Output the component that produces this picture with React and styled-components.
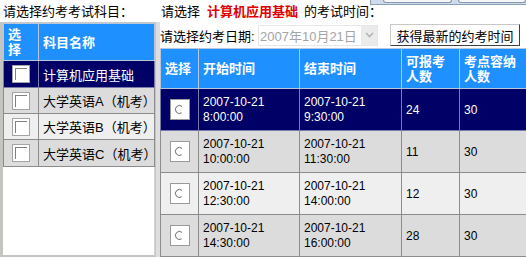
import React from "react";
import styled, { createGlobalStyle } from "styled-components";

const GlobalStyle = createGlobalStyle`
  html, body { margin: 0; padding: 0; background: #fff; }
  body {
    font-family: "Liberation Sans", "Noto Sans CJK SC", sans-serif;
    font-size: 13px;
    color: #000;
  }
`;

const Page = styled.div`
  position: relative;
  display: flex;
  width: 526px;
  height: 259px;
  overflow: hidden;
`;

const LeftFrame = styled.div`
  width: 155px;
  height: 257px;
  display: flex;
  flex-direction: column;
`;

const Divider = styled.div`
  width: 5px;
  margin-top: 22px;
  height: 235px;
  background: #dedede;
  border-left: 1px solid #c4c4c4;
  box-sizing: border-box;
`;

const RightFrame = styled.div`
  flex: 1;
  display: flex;
  flex-direction: column;
  min-width: 0;
`;

const Caption = styled.div`
  height: 22px;
  line-height: 24px;
  padding-left: ${(p) => p.$indent || 0}px;
  white-space: nowrap;
  background: #fff;
`;

const Subject = styled.span`
  color: #e00000;
  font-weight: bold;
  margin: 0 6px 0 7px;
`;

const TableBox = styled.div`
  flex: 1;
  background: #fff;
  border-left: 3px solid #c4c4c0;
  border-top: 1px solid #c8c8c8;
  border-bottom: 2px solid #c4c4c0;
  border-right: 1px solid #d4d4d4;
`;

const Grid = styled.table`
  border-collapse: collapse;
  table-layout: fixed;
  width: ${(p) => p.$width}px;
`;

const HeadRow = styled.tr`
  height: ${(p) => p.$height}px;
  background: #1e90ff;
`;

const Th = styled.th`
  color: #fff;
  font-weight: bold;
  text-align: left;
  padding: 0 4px;
  line-height: 15px;
  border: 1px solid #b8c8d8;
  vertical-align: middle;
`;

const rowColors = {
  active: { bg: "#000066", fg: "#fff", line: "#7a7aa8" },
  dark: { bg: "#dcdcdc", fg: "#000", line: "#8c8c8c" },
  light: { bg: "#efefef", fg: "#000", line: "#8c8c8c" },
};

const Row = styled.tr`
  height: ${(p) => p.$height}px;
  background: ${(p) => rowColors[p.$tone].bg};
  color: ${(p) => rowColors[p.$tone].fg};
  td { border-color: ${(p) => rowColors[p.$tone].line}; }
`;

const Td = styled.td`
  padding: 0 ${(p) => (p.$center ? 0 : 4)}px;
  text-align: ${(p) => (p.$center ? "center" : "left")};
  border: 1px solid #8c8c8c;
  vertical-align: middle;
  white-space: nowrap;
`;

const TimeText = styled.div`
  font-size: 12px;
  line-height: 15px;
`;

const Count = styled.span`
  font-size: 12px;
`;

const CheckBox = styled.span`
  display: inline-flex;
  box-sizing: border-box;
  width: 18px;
  height: 18px;
  background: #fff;
  border: 1px solid #a4a4a4;
  padding: 2px;
  vertical-align: middle;
  &::after {
    content: "";
    flex: 1;
    border-top: 1px solid #808080;
    border-left: 1px solid #808080;
  }
`;

const RadioBox = styled.span`
  display: inline-flex;
  align-items: center;
  justify-content: center;
  box-sizing: border-box;
  width: 20px;
  height: 21px;
  background: #fff;
  border: 1px solid #9a9a9a;
  vertical-align: middle;
`;

const DateRow = styled.div`
  height: 26px;
  display: flex;
  align-items: center;
  background: #fff;
  white-space: nowrap;
`;

const DateLabel = styled.span`
  width: 98px;
`;

const Select = styled.div`
  width: 120px;
  height: 21px;
  box-sizing: border-box;
  display: flex;
  align-items: center;
  color: #a4a4a4;
  background: #fff;
  border: 1px solid #e6e6e6;
`;

const SelectText = styled.span`
  flex: 1;
  padding-left: 1px;
`;

const SelectArrow = styled.span`
  width: 16px;
  height: 19px;
  display: flex;
  align-items: center;
  justify-content: center;
  background: #ebebeb;
`;

const Button = styled.button`
  margin-left: 12px;
  height: 22px;
  width: 130px;
  padding: 0;
  font: inherit;
  color: #000;
  background: #fff;
  border: 1px solid;
  border-color: #c8c8c8 #404040 #404040 #c8c8c8;
`;

const Popup = styled.div`
  position: absolute;
  top: 0;
  left: 370px;
  right: 0;
  height: 4px;
  display: flex;
  gap: 6px;
  padding-left: 12px;
  background: #cddbeb;
  border-left: 1px solid #8aa0b8;
  border-bottom: 1px solid #8aa0b8;
  z-index: 2;
`;

const PopupButton = styled.span`
  width: ${(p) => p.$w}px;
  height: 2px;
  background: #f4f6f8;
  border: 1px solid #8898ac;
  border-top: none;
  border-radius: 0 0 4px 4px;
`;

function RadioMark() {
  return (
    <svg width="11" height="11" viewBox="0 0 11 11">
      <path d="M8 2.4 A4 4 0 1 0 7.6 8.8" fill="none" stroke="#6a6a6a" strokeWidth="1" />
    </svg>
  );
}

function Chevron() {
  return (
    <svg width="9" height="6" viewBox="0 0 9 6">
      <path d="M1 1 L4.5 4.5 L8 1" fill="none" stroke="#b4b4b4" strokeWidth="1.6" />
    </svg>
  );
}

const subjects = [
  { name: "计算机应用基础", tone: "active", h: 27 },
  { name: "大学英语A（机考）", tone: "dark", h: 26 },
  { name: "大学英语B（机考）", tone: "light", h: 26 },
  { name: "大学英语C（机考）", tone: "dark", h: 27 },
];

const sessions = [
  { start: "8:00:00", end: "9:30:00", count: 24, cap: 30, tone: "active" },
  { start: "10:00:00", end: "11:30:00", count: 11, cap: 30, tone: "dark" },
  { start: "12:30:00", end: "14:00:00", count: 12, cap: 30, tone: "light" },
  { start: "14:30:00", end: "16:00:00", count: 28, cap: 30, tone: "dark" },
];

export default function App() {
  return (
    <Page>
      <GlobalStyle />
      <LeftFrame>
        <Caption $indent={3}>请选择约考考试科目：</Caption>
        <TableBox>
          <Grid $width={152}>
            <colgroup>
              <col style={{ width: 35 }} />
              <col />
            </colgroup>
            <thead>
              <HeadRow $height={37}>
                <Th>选<br />择</Th>
                <Th>科目名称</Th>
              </HeadRow>
            </thead>
            <tbody>
              {subjects.map((s) => (
                <Row key={s.name} $tone={s.tone} $height={s.h}>
                  <Td $center><CheckBox /></Td>
                  <Td>{s.name}</Td>
                </Row>
              ))}
            </tbody>
          </Grid>
        </TableBox>
      </LeftFrame>
      <Divider />
      <RightFrame>
        <Caption $indent={1}>
          请选择<Subject>计算机应用基础</Subject>的考试时间：
        </Caption>
        <DateRow>
          <DateLabel>请选择约考日期:</DateLabel>
          <Select>
            <SelectText>2007年10月21日</SelectText>
            <SelectArrow><Chevron /></SelectArrow>
          </Select>
          <Button>获得最新的约考时间</Button>
        </DateRow>
        <Grid $width={367}>
          <colgroup>
            <col style={{ width: 38 }} />
            <col style={{ width: 101 }} />
            <col style={{ width: 102 }} />
            <col style={{ width: 58 }} />
            <col style={{ width: 68 }} />
          </colgroup>
          <thead>
            <HeadRow $height={40}>
              <Th>选择</Th>
              <Th>开始时间</Th>
              <Th>结束时间</Th>
              <Th>可报考人数</Th>
              <Th>考点容纳人数</Th>
            </HeadRow>
          </thead>
          <tbody>
            {sessions.map((s) => (
              <Row key={s.start} $tone={s.tone} $height={42}>
                <Td $center><RadioBox><RadioMark /></RadioBox></Td>
                <Td>
                  <TimeText>2007-10-21</TimeText>
                  <TimeText>{s.start}</TimeText>
                </Td>
                <Td>
                  <TimeText>2007-10-21</TimeText>
                  <TimeText>{s.end}</TimeText>
                </Td>
                <Td><Count>{s.count}</Count></Td>
                <Td><Count>{s.cap}</Count></Td>
              </Row>
            ))}
          </tbody>
        </Grid>
      </RightFrame>
      <Popup>
        <PopupButton $w={70} />
        <PopupButton $w={70} />
      </Popup>
    </Page>
  );
}
